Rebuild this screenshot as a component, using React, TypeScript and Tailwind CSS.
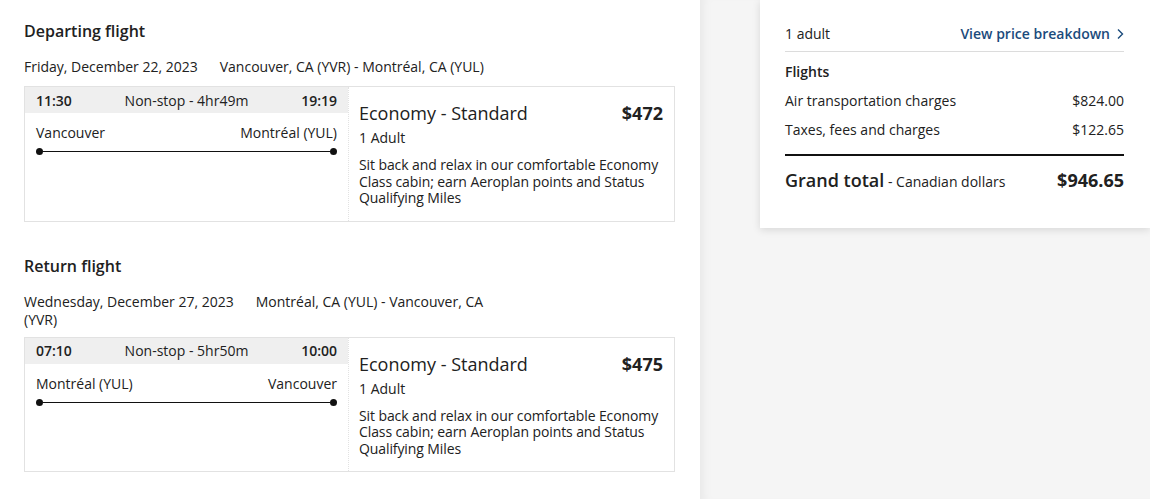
import { Fragment } from "react";

interface FlightProps {
  title: string;
  date: string;
  route: string;
  routeTail?: string;
  depart: string;
  arrive: string;
  duration: string;
  from: string;
  to: string;
  price: string;
}

const flights: FlightProps[] = [
  {
    title: "Departing flight",
    date: "Friday, December 22, 2023",
    route: "Vancouver, CA (YVR) - Montréal, CA (YUL)",
    depart: "11:30",
    arrive: "19:19",
    duration: "Non-stop - 4hr49m",
    from: "Vancouver",
    to: "Montréal (YUL)",
    price: "$472",
  },
  {
    title: "Return flight",
    date: "Wednesday, December 27, 2023",
    route: "Montréal, CA (YUL) - Vancouver, CA",
    routeTail: "(YVR)",
    depart: "07:10",
    arrive: "10:00",
    duration: "Non-stop - 5hr50m",
    from: "Montréal (YUL)",
    to: "Vancouver",
    price: "$475",
  },
];

function FlightBlock({ f, first }: { f: FlightProps; first: boolean }) {
  return (
    <section className={first ? "pt-[19px]" : "pt-[32px]"}>
      <h2 className="text-[16px] leading-[24px] font-semibold">{f.title}</h2>
      <p className="mt-[15px] text-[14px] leading-[18px]">
        <span className="mr-[22px]">{f.date}</span>
        {f.route}
        {f.routeTail && (
          <Fragment>
            <br />
            {f.routeTail}
          </Fragment>
        )}
      </p>

      {/* flight card */}
      <div className={`flex border border-[#e2e2e2] ${f.routeTail ? "mt-[8px]" : "mt-[10px]"}`}>
        <div className="w-[323px] shrink-0">
          <div className="flex h-[26px] items-center justify-between bg-[#efefef] px-[11px] text-[14px]">
            <span className="font-semibold">{f.depart}</span>
            <span>{f.duration}</span>
            <span className="font-semibold">{f.arrive}</span>
          </div>
          <div className="px-[11px] pt-[10px]">
            <div className="flex justify-between text-[14px] leading-[20px]">
              <span>{f.from}</span>
              <span>{f.to}</span>
            </div>
            <div className="mt-[5px] flex items-center">
              <span className="h-[7px] w-[7px] rounded-full bg-[#111]" />
              <span className="h-px flex-1 bg-[#111]" />
              <span className="h-[7px] w-[7px] rounded-full bg-[#111]" />
            </div>
          </div>
        </div>
        <div className="flex-1 border-l border-dotted border-[#e2e2e2] pl-[10px] pr-[11px] pt-[13px] pb-[14px]">
          <div className="flex items-center justify-between text-[18px] leading-[26px]">
            <span>Economy - Standard</span>
            <span className="font-bold">{f.price}</span>
          </div>
          <div className="mt-[2px] text-[14px] leading-[20px]">1 Adult</div>
          <p className="mt-[9px] mr-[-8px] text-[14px] leading-[16.5px] tracking-[-0.1px]">
            Sit back and relax in our comfortable Economy Class cabin; earn Aeroplan points and Status Qualifying Miles
          </p>
        </div>
      </div>
    </section>
  );
}

function PriceRow({ label, value }: { label: string; value: string }) {
  return (
    <div className="flex justify-between text-[14px] leading-[20px]">
      <span>{label}</span>
      <span>{value}</span>
    </div>
  );
}

export default function App() {
  return (
    <div
      className="flex h-[499px] w-[1150px] overflow-hidden bg-white text-[#212121]"
      style={{ fontFamily: '"Open Sans", "Noto Sans", sans-serif' }}
    >
      <div className="w-[700px] shrink-0 pl-[24px] pr-[25px]">
        {flights.map((f, i) => (
          <FlightBlock key={f.title} f={f} first={i === 0} />
        ))}
      </div>

      <div className="flex-1 bg-[#f5f5f5] pl-[60px] shadow-[inset_10px_0_10px_-6px_rgba(0,0,0,0.05)]">
        <div className="bg-white pl-[25px] pr-[26px] pt-[24px] pb-[33px] shadow-[0_2px_8px_rgba(0,0,0,0.12)]">
          <div className="flex items-center justify-between border-b border-[#dcdcdc] pb-[7px] text-[14px] leading-[20px]">
            <span>1 adult</span>
            <a className="flex items-center gap-[6px] font-semibold text-[#1b4b7c]">
              View price breakdown
              <svg width="8" height="12" viewBox="0 0 8 12" fill="none">
                <path d="M2 1.5 6.5 6 2 10.5" stroke="#1b4b7c" strokeWidth="1.4" />
              </svg>
            </a>
          </div>
          <div className="mt-[10px] text-[14px] leading-[20px] font-semibold">Flights</div>
          <div className="mt-[9px] flex flex-col gap-[9px]">
            <PriceRow label="Air transportation charges" value="$824.00" />
            <PriceRow label="Taxes, fees and charges" value="$122.65" />
          </div>
          <div className="mt-[14px] h-[2px] bg-[#111]" />
          <div className="mt-[11px] flex items-baseline justify-between leading-[26px]">
            <span>
              <span className="text-[18px] font-semibold">Grand total</span>
              <span className="text-[14px]"> - Canadian dollars</span>
            </span>
            <span className="text-[18px] font-bold">$946.65</span>
          </div>
        </div>
      </div>
    </div>
  );
}
